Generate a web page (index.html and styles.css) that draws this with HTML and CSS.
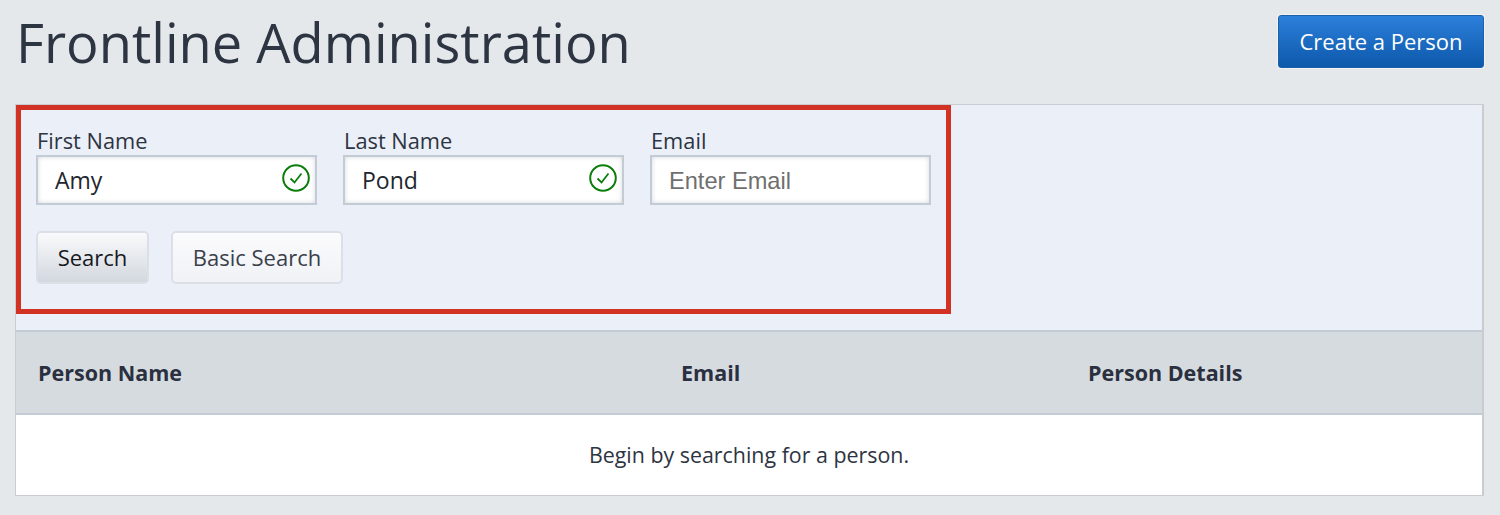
FILE: index.html
```html
<!DOCTYPE html>
<html lang="en">
<head>
  <meta charset="UTF-8" />
  <title>Frontline Administration</title>
  <link rel="stylesheet" href="styles.css">
</head>
<body>

<header class="page-head">
  <h1>Frontline Administration</h1>
  <button class="btn-create">Create a Person</button>
</header>

<div class="panel">
  <div class="search-area">
    <form class="search-form">
      <div class="fields">
        <div class="field">
          <label for="firstName">First Name</label>
          <div class="input-wrap">
            <input id="firstName" type="text" value="Amy" />
            <svg class="check" viewBox="0 0 28 28" width="28" height="28" fill="none" stroke="#0a7d0a">
              <circle cx="14" cy="14" r="12.8" stroke-width="2" />
              <path d="M8.5 14.5l4 4 7-9" stroke-width="1.8" />
            </svg>
          </div>
        </div>
        <div class="field">
          <label for="lastName">Last Name</label>
          <div class="input-wrap">
            <input id="lastName" type="text" value="Pond" />
            <svg class="check" viewBox="0 0 28 28" width="28" height="28" fill="none" stroke="#0a7d0a">
              <circle cx="14" cy="14" r="12.8" stroke-width="2" />
              <path d="M8.5 14.5l4 4 7-9" stroke-width="1.8" />
            </svg>
          </div>
        </div>
        <div class="field">
          <label for="email">Email</label>
          <div class="input-wrap">
            <input id="email" type="text" placeholder="Enter Email" />
          </div>
        </div>
      </div>
      <div class="actions">
        <button type="button" class="btn btn-search">Search</button>
        <button type="button" class="btn btn-basic">Basic Search</button>
      </div>
    </form>
  </div>

  <div class="table-head">
    <div>Person Name</div>
    <div>Email</div>
    <div>Person Details</div>
  </div>
  <div class="table-empty">Begin by searching for a person.</div>
</div>

</body>
</html>
```

FILE: styles.css
```css
* { box-sizing: border-box; }
body { margin: 0; height: 515px; overflow: hidden; padding: 0 16px 0 15px; background: #e5e8eb; color: #2a3040; font-family: "Open Sans", sans-serif; }

.page-head { height: 104px; display: flex; justify-content: space-between; align-items: flex-start; }
h1 { margin: 0; padding: 6px 0 0 1px; font-size: 54.2px; line-height: 72px; font-weight: 400; color: #2d3442; }
.btn-create { width: 206px; height: 53px; margin: 15px 0 0; padding: 0 0 2px; border: 1px solid #1a5fa8; border-radius: 3px; background: linear-gradient(#2c7fdb, #0d59ab); color: #fff; font: 400 22px "Open Sans", sans-serif; box-shadow: 0 0 0 1px #f0f2f4; }

.panel { border: 1px solid #c9cdd2; border-width: 1px 2px 2px 1px; height: 392px; background: #fff; }
.search-area { height: 227px; background: #ebf0f8; border-bottom: 2px solid #c3cbd4; }
.search-form { width: 935px; height: 209px; border: 5px solid #d13224; padding: 11px 0 0 15px; }

.fields { display: flex; gap: 26px; }
.field { width: 281px; }
.field label { display: block; height: 34px; padding-left: 1px; font-size: 21.8px; line-height: 40px; color: #2d3442; }
.input-wrap { position: relative; }
.input-wrap input { display: block; width: 100%; height: 50px; padding: 0 0 0 17px; border: 2px solid #c3ccd5; background: #fff; box-shadow: inset 0 0 5px #d5d9de; font: 400 23px "Open Sans", sans-serif; color: #22262e; outline: none; }
.input-wrap input::placeholder { font-family: "Liberation Sans", sans-serif; font-size: 23.6px; color: #6f6f6f; opacity: 1; }
.check { position: absolute; top: 9px; right: 7px; }

.actions { display: flex; gap: 22px; margin-top: 26px; }
.btn { height: 53px; padding: 0 0 2px; border: 2px solid #dce0e6; border-radius: 5px; font: 400 22px "Open Sans", sans-serif; }
.btn-search { width: 113px; background: linear-gradient(#f9fafb, #d3d8df); color: #15181d; }
.btn-basic { width: 172px; background: linear-gradient(#fbfbfd, #f0f2f6); color: #3a3f4a; }

.table-head { display: grid; grid-template-columns: 643px 407px 1fr; align-items: center; height: 83px; padding: 0 0 0 22px; background: #d6dbdf; border-bottom: 2px solid #c3cbd4; font-size: 21.5px; font-weight: 700; color: #2a3040; }
.table-empty { height: 80px; padding: 0 0 2px; display: flex; align-items: center; justify-content: center; background: #fff; font-size: 21.4px; color: #2d3442; }
```
